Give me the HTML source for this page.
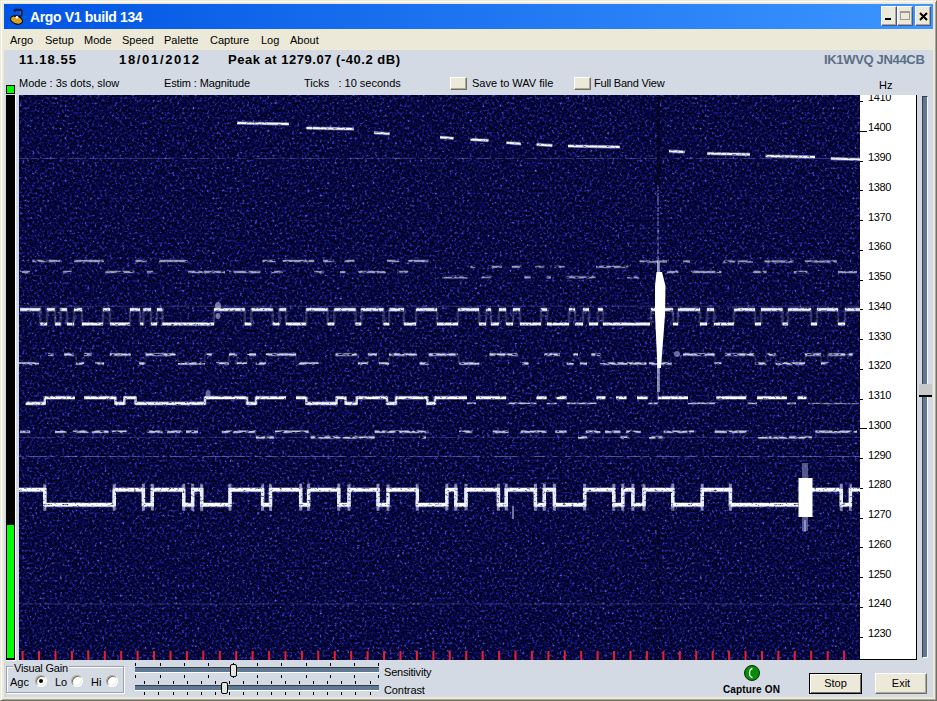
<!DOCTYPE html>
<html><head><meta charset="utf-8">
<style>
*{margin:0;padding:0;box-sizing:border-box}
html,body{width:937px;height:701px;overflow:hidden;background:#ECE9D8;font-family:"Liberation Sans",sans-serif;font-size:11px;color:#000}
.a{position:absolute;white-space:nowrap;line-height:1}
.r{position:absolute}
#title{position:absolute;left:4px;top:4px;width:929px;height:25px;background:linear-gradient(to right,#0054E3,#3D95FF)}
#menu{position:absolute;left:4px;top:29px;width:929px;height:21px;background:#ECE9D8}
#client{position:absolute;left:4px;top:50px;width:929px;height:647px;background:#D3DAE3}
.tb{position:absolute;top:6px;width:16px;height:20px;background:#ECE9D8;border-top:1px solid #fff;border-left:1px solid #fff;border-right:1px solid #40589a;border-bottom:1px solid #40589a;box-shadow:inset -1px -1px 0 #ACA899}
.bold{font-weight:bold}
#axis{position:absolute;left:860px;top:95px;width:57px;height:565px;background:#fff;border-right:1px solid #000;border-bottom:1px solid #000;overflow:hidden}
.chk{position:absolute;top:77px;width:17px;height:13px;background:#ECE9D8;border-top:1px solid #fff;border-left:1px solid #fff;border-right:1px solid #716F64;border-bottom:1px solid #716F64;box-shadow:inset -1px -1px 0 #ACA899}
.btn{position:absolute;top:673px;width:52px;height:21px;background:#ECE9D8;border-top:1px solid #fff;border-left:1px solid #fff;border-right:1px solid #716F64;border-bottom:1px solid #716F64;box-shadow:inset -1px -1px 0 #ACA899;text-align:center;line-height:19px;font-size:11px}
.radio{position:absolute;top:675px;width:12px;height:12px;border-radius:50%;background:#fff;border:1px solid;border-color:#ACA899 #fff #fff #ACA899;box-shadow:inset 1px 1px 0 #716F64,inset -1px -1px 0 #ECE9D8}
.tick{position:absolute;width:1px;height:3px;background:#000}
</style></head><body>
<div class="r" style="left:0;top:0;width:937px;height:701px;background:#ECE9D8;border-left:1px solid #ECE9D8;border-top:1px solid #ECE9D8;border-right:1px solid #716F64;border-bottom:1px solid #716F64;box-shadow:inset 1px 1px 0 #fff,inset -1px -1px 0 #ACA899"></div>
<div id="title"></div>
<svg class="r" style="left:6px;top:5px" width="22" height="22" viewBox="0 0 22 22">
<path d="M8,6.5 L9.5,4.8 L15,4.8 L15.5,6 L15.5,10 L13.5,11.8 L10,11.5" fill="none" stroke="#141a40" stroke-width="2.2" stroke-linejoin="round"/>
<path d="M14.6,6 L14.6,10" stroke="#7a7a90" stroke-width="0.8"/>
<ellipse cx="10.5" cy="15" rx="6.2" ry="3.9" transform="rotate(18 10.5 15)" fill="#dca21e" stroke="#000" stroke-width="1"/>
<path d="M8.5,11.8 C10,11 12,11 13.5,12" fill="none" stroke="#000" stroke-width="1.2"/>
<circle cx="11" cy="12.3" r="1.4" fill="#fff"/>
</svg>
<div class="a bold" style="left:30px;top:10px;font-size:14px;color:#fff;letter-spacing:-0.35px">Argo V1 build 134</div>
<div class="tb" style="left:881px"><div class="r" style="left:3px;top:11px;width:6px;height:2px;background:#000"></div></div>
<div class="tb" style="left:897px"><div class="r" style="left:2px;top:4px;width:10px;height:9px;border:1px solid #9a9a9a;border-top-width:2px"></div></div>
<div class="tb" style="left:915px"><svg class="r" style="left:3px;top:5px" width="9" height="9" viewBox="0 0 9 9"><path d="M1,1 L8,8 M8,1 L1,8" stroke="#000" stroke-width="2"/></svg></div>
<div id="menu"></div>
<div class="a" style="left:10px;top:35px">Argo</div>
<div class="a" style="left:45px;top:35px">Setup</div>
<div class="a" style="left:84px;top:35px">Mode</div>
<div class="a" style="left:122px;top:35px">Speed</div>
<div class="a" style="left:164px;top:35px">Palette</div>
<div class="a" style="left:210px;top:35px">Capture</div>
<div class="a" style="left:261px;top:35px">Log</div>
<div class="a" style="left:290px;top:35px">About</div>
<div id="client"></div>
<div class="a bold" style="left:19px;top:53px;font-size:13px;letter-spacing:1px">11.18.55</div>
<div class="a bold" style="left:119px;top:53px;font-size:13px;letter-spacing:1.67px">18/01/2012</div>
<div class="a bold" style="left:228px;top:53px;font-size:13px;letter-spacing:0.52px">Peak at 1279.07 (-40.2 dB)</div>
<div class="a bold" style="left:824px;top:53px;font-size:13px;color:#5B6F88;letter-spacing:-0.33px">IK1WVQ JN44CB</div>
<div class="a" style="left:19px;top:78px">Mode : 3s dots, slow</div>
<div class="a" style="left:164px;top:78px;letter-spacing:-0.12px">Estim : Magnitude</div>
<div class="a" style="left:304px;top:78px">Ticks &nbsp; : 10 seconds</div>
<div class="chk" style="left:450px"></div>
<div class="a" style="left:472px;top:78px">Save to WAV file</div>
<div class="chk" style="left:574px"></div>
<div class="a" style="left:594px;top:78px;letter-spacing:-0.2px">Full Band View</div>
<div class="a" style="left:879px;top:80px">Hz</div>
<!-- level meter -->
<div class="r" style="left:6px;top:85px;width:9px;height:9px;background:#00ff00;border:1px solid #000"></div>
<div class="r" style="left:6px;top:95px;width:10px;height:566px;background:#000;border-right:1px solid #fff;border-bottom:1px solid #fff"></div>
<div class="r" style="left:7px;top:525px;width:7px;height:133px;background:#00ff00"></div>
<svg id="specsvg" width="841" height="565" viewBox="19 95 841 565" style="position:absolute;left:19px;top:95px">
<defs>
<filter id="nz" x="19" y="95" width="841" height="565" filterUnits="userSpaceOnUse" color-interpolation-filters="sRGB">
<feTurbulence type="fractalNoise" baseFrequency="0.4" numOctaves="2" seed="7" result="t"/>
<feColorMatrix in="t" type="matrix" values="1 0 0 0 0  1 0 0 0 0  1 0 0 0 0  0 0 0 0 1"/>
<feComponentTransfer><feFuncR type="table" tableValues="0.004 0.005 0.006 0.008 0.01 0.02 0.05 0.13 0.28 0.45 0.6"/><feFuncG type="table" tableValues="0.005 0.006 0.008 0.01 0.013 0.025 0.06 0.14 0.3 0.47 0.62"/><feFuncB type="table" tableValues="0.05 0.06 0.07 0.09 0.15 0.25 0.38 0.54 0.72 0.86 0.95"/></feComponentTransfer>
<feGaussianBlur stdDeviation="0"/>
</filter>
<filter id="gl" x="19" y="95" width="841" height="565" filterUnits="userSpaceOnUse"><feGaussianBlur stdDeviation="0.9"/></filter>
<filter id="brkS" x="19" y="95" width="841" height="565" filterUnits="userSpaceOnUse" color-interpolation-filters="sRGB">
<feTurbulence type="fractalNoise" baseFrequency="0.35 0.5" numOctaves="2" seed="11" result="n"/>
<feColorMatrix in="n" type="matrix" values="0 0 0 0 1  0 0 0 0 1  0 0 0 0 1  3 0 0 0 -0.3" result="m"/>
<feComposite in="SourceGraphic" in2="m" operator="in"/>
</filter>
<filter id="brkW" x="19" y="95" width="841" height="565" filterUnits="userSpaceOnUse" color-interpolation-filters="sRGB">
<feTurbulence type="fractalNoise" baseFrequency="0.2 0.5" numOctaves="2" seed="23" result="n"/>
<feColorMatrix in="n" type="matrix" values="0 0 0 0 1  0 0 0 0 1  0 0 0 0 1  4 0 0 0 -1.1" result="m"/>
<feComposite in="SourceGraphic" in2="m" operator="in"/>
</filter>
</defs>
<rect x="19" y="95" width="841" height="565" fill="#000"/>
<rect x="19" y="95" width="841" height="565" filter="url(#nz)"/>
<rect x="657" y="95" width="3" height="90" fill="#000" opacity="0.45"/><rect x="657" y="520" width="3" height="140" fill="#000" opacity="0.3"/>
<g filter="url(#brkS)"><path d="M19.0,489.7 H44.8 M44.8,504.7 H114.2 M114.2,489.7 H143.4 M143.4,504.7 H152.3 M152.3,489.7 H183.7 M183.7,504.7 H192.7 M192.7,489.7 H201.7 M201.7,504.7 H230.0 M230.0,489.7 H262.6 M262.6,504.7 H270.5 M270.5,489.7 H300.7 M300.7,504.7 H308.6 M308.6,489.7 H338.8 M338.8,504.7 H349.0 M349.0,489.7 H378.0 M378.0,504.7 H388.0 M388.0,489.7 H417.3 M417.3,504.7 H446.8 M446.8,489.7 H455.8 M455.8,504.7 H466.0 M466.0,489.7 H498.4 M498.4,504.7 H506.2 M506.2,489.7 H535.4 M535.4,504.7 H544.3 M544.3,489.7 H554.4 M554.4,504.7 H584.7 M584.7,489.7 H613.8 M613.8,504.7 H622.8 M622.8,489.7 H632.9 M632.9,504.7 H644.0 M644.0,489.7 H672.8 M672.8,504.7 H702.2 M702.2,489.7 H731.6 M730.4,504.7 H798.3 M812.0,489.7 H841.3 M841.3,504.7 H850.4 M850.4,489.7 H860.0" fill="none" stroke="#b8beff" stroke-width="5.1" opacity="0.50"/><path d="M19.0,489.7 H44.8 M44.8,504.7 H114.2 M114.2,489.7 H143.4 M143.4,504.7 H152.3 M152.3,489.7 H183.7 M183.7,504.7 H192.7 M192.7,489.7 H201.7 M201.7,504.7 H230.0 M230.0,489.7 H262.6 M262.6,504.7 H270.5 M270.5,489.7 H300.7 M300.7,504.7 H308.6 M308.6,489.7 H338.8 M338.8,504.7 H349.0 M349.0,489.7 H378.0 M378.0,504.7 H388.0 M388.0,489.7 H417.3 M417.3,504.7 H446.8 M446.8,489.7 H455.8 M455.8,504.7 H466.0 M466.0,489.7 H498.4 M498.4,504.7 H506.2 M506.2,489.7 H535.4 M535.4,504.7 H544.3 M544.3,489.7 H554.4 M554.4,504.7 H584.7 M584.7,489.7 H613.8 M613.8,504.7 H622.8 M622.8,489.7 H632.9 M632.9,504.7 H644.0 M644.0,489.7 H672.8 M672.8,504.7 H702.2 M702.2,489.7 H731.6 M730.4,504.7 H798.3 M812.0,489.7 H841.3 M841.3,504.7 H850.4 M850.4,489.7 H860.0" fill="none" stroke="#fff" stroke-width="3.5" opacity="1.00"/><path d="M44.8,489.7 V504.7 M114.2,504.7 V489.7 M143.4,489.7 V504.7 M152.3,504.7 V489.7 M183.7,489.7 V504.7 M192.7,504.7 V489.7 M201.7,489.7 V504.7 M230.0,504.7 V489.7 M262.6,489.7 V504.7 M270.5,504.7 V489.7 M300.7,489.7 V504.7 M308.6,504.7 V489.7 M338.8,489.7 V504.7 M349.0,504.7 V489.7 M378.0,489.7 V504.7 M388.0,504.7 V489.7 M417.3,489.7 V504.7 M446.8,504.7 V489.7 M455.8,489.7 V504.7 M466.0,504.7 V489.7 M498.4,489.7 V504.7 M506.2,504.7 V489.7 M535.4,489.7 V504.7 M544.3,504.7 V489.7 M554.4,489.7 V504.7 M584.7,504.7 V489.7 M613.8,489.7 V504.7 M622.8,504.7 V489.7 M632.9,489.7 V504.7 M644.0,504.7 V489.7 M672.8,489.7 V504.7 M702.2,504.7 V489.7 M730.4,489.7 V504.7 M841.3,489.7 V504.7 M850.4,504.7 V489.7" fill="none" stroke="#fff" stroke-width="3.5" stroke-linecap="square" opacity="1.00"/><path d="M44.8,483.7 V510.7 M114.2,483.7 V510.7 M143.4,483.7 V510.7 M152.3,483.7 V510.7 M183.7,483.7 V510.7 M192.7,483.7 V510.7 M201.7,483.7 V510.7 M230.0,483.7 V510.7 M262.6,483.7 V510.7 M270.5,483.7 V510.7 M300.7,483.7 V510.7 M308.6,483.7 V510.7 M338.8,483.7 V510.7 M349.0,483.7 V510.7 M378.0,483.7 V510.7 M388.0,483.7 V510.7 M417.3,483.7 V510.7 M446.8,483.7 V510.7 M455.8,483.7 V510.7 M466.0,483.7 V510.7 M498.4,483.7 V510.7 M506.2,483.7 V510.7 M535.4,483.7 V510.7 M544.3,483.7 V510.7 M554.4,483.7 V510.7 M584.7,483.7 V510.7 M613.8,483.7 V510.7 M622.8,483.7 V510.7 M632.9,483.7 V510.7 M644.0,483.7 V510.7 M672.8,483.7 V510.7 M702.2,483.7 V510.7 M730.4,483.7 V510.7 M841.3,483.7 V510.7 M850.4,483.7 V510.7 " fill="none" stroke="#dfe2ff" stroke-width="3" opacity="0.6"/><path d="M20.0,309.6 H40.3 M40.3,324.0 H47.0 M47.0,309.6 H55.0 M55.0,324.0 H60.5 M60.5,309.6 H67.0 M67.0,324.0 H74.0 M74.0,309.6 H82.0 M82.0,324.0 H103.0 M103.0,309.6 H110.0 M110.0,324.0 H130.0 M130.0,309.6 H140.0 M140.0,324.0 H143.4 M143.4,309.6 H151.0 M151.0,324.0 H157.0 M157.0,309.6 H162.4 M162.4,324.0 H214.0 M214.0,309.6 H244.7 M244.7,324.0 H251.4 M251.4,309.6 H272.7 M272.7,324.0 H279.4 M279.4,309.6 H286.1 M286.1,324.0 H306.3 M306.3,309.6 H327.6 M327.6,324.0 H334.3 M334.3,309.6 H355.6 M355.6,324.0 H361.2 M361.2,309.6 H383.6 M383.6,324.0 H389.2 M389.2,309.6 H404.0 M404.0,324.0 H416.0 M416.0,309.6 H437.0 M437.0,324.0 H458.0 M458.0,309.6 H479.0 M479.0,324.0 H486.0 M486.0,309.6 H491.0 M491.0,324.0 H499.0 M499.0,309.6 H506.0 M506.0,324.0 H513.0 M513.0,309.6 H520.0 M520.0,324.0 H541.0 M541.0,309.6 H547.0 M547.0,324.0 H569.0 M569.0,309.6 H575.0 M575.0,324.0 H583.0 M583.0,309.6 H589.0 M589.0,324.0 H598.0 M598.0,309.6 H603.0 M603.0,324.0 H650.0 M651.0,309.6 H673.0 M673.0,324.0 H678.0 M678.0,309.6 H700.0 M700.0,324.0 H707.0 M707.0,309.6 H714.0 M714.0,324.0 H734.0 M734.0,309.6 H755.0 M755.0,324.0 H761.0 M761.0,309.6 H782.5 M782.5,324.0 H788.0 M788.0,309.6 H811.0 M811.0,324.0 H817.0 M817.0,309.6 H838.0 M838.0,324.0 H845.0 M845.0,309.6 H860.0" fill="none" stroke="#b8beff" stroke-width="4.1" opacity="0.47"/><path d="M20.0,309.6 H40.3 M40.3,324.0 H47.0 M47.0,309.6 H55.0 M55.0,324.0 H60.5 M60.5,309.6 H67.0 M67.0,324.0 H74.0 M74.0,309.6 H82.0 M82.0,324.0 H103.0 M103.0,309.6 H110.0 M110.0,324.0 H130.0 M130.0,309.6 H140.0 M140.0,324.0 H143.4 M143.4,309.6 H151.0 M151.0,324.0 H157.0 M157.0,309.6 H162.4 M162.4,324.0 H214.0 M214.0,309.6 H244.7 M244.7,324.0 H251.4 M251.4,309.6 H272.7 M272.7,324.0 H279.4 M279.4,309.6 H286.1 M286.1,324.0 H306.3 M306.3,309.6 H327.6 M327.6,324.0 H334.3 M334.3,309.6 H355.6 M355.6,324.0 H361.2 M361.2,309.6 H383.6 M383.6,324.0 H389.2 M389.2,309.6 H404.0 M404.0,324.0 H416.0 M416.0,309.6 H437.0 M437.0,324.0 H458.0 M458.0,309.6 H479.0 M479.0,324.0 H486.0 M486.0,309.6 H491.0 M491.0,324.0 H499.0 M499.0,309.6 H506.0 M506.0,324.0 H513.0 M513.0,309.6 H520.0 M520.0,324.0 H541.0 M541.0,309.6 H547.0 M547.0,324.0 H569.0 M569.0,309.6 H575.0 M575.0,324.0 H583.0 M583.0,309.6 H589.0 M589.0,324.0 H598.0 M598.0,309.6 H603.0 M603.0,324.0 H650.0 M651.0,309.6 H673.0 M673.0,324.0 H678.0 M678.0,309.6 H700.0 M700.0,324.0 H707.0 M707.0,309.6 H714.0 M714.0,324.0 H734.0 M734.0,309.6 H755.0 M755.0,324.0 H761.0 M761.0,309.6 H782.5 M782.5,324.0 H788.0 M788.0,309.6 H811.0 M811.0,324.0 H817.0 M817.0,309.6 H838.0 M838.0,324.0 H845.0 M845.0,309.6 H860.0" fill="none" stroke="#fff" stroke-width="2.5" opacity="0.95"/><path d="M40.3,309.6 V324.0 M47.0,324.0 V309.6 M55.0,309.6 V324.0 M60.5,324.0 V309.6 M67.0,309.6 V324.0 M74.0,324.0 V309.6 M82.0,309.6 V324.0 M103.0,324.0 V309.6 M110.0,309.6 V324.0 M130.0,324.0 V309.6 M140.0,309.6 V324.0 M143.4,324.0 V309.6 M151.0,309.6 V324.0 M157.0,324.0 V309.6 M162.4,309.6 V324.0 M214.0,324.0 V309.6 M244.7,309.6 V324.0 M251.4,324.0 V309.6 M272.7,309.6 V324.0 M279.4,324.0 V309.6 M286.1,309.6 V324.0 M306.3,324.0 V309.6 M327.6,309.6 V324.0 M334.3,324.0 V309.6 M355.6,309.6 V324.0 M361.2,324.0 V309.6 M383.6,309.6 V324.0 M389.2,324.0 V309.6 M404.0,309.6 V324.0 M416.0,324.0 V309.6 M437.0,309.6 V324.0 M458.0,324.0 V309.6 M479.0,309.6 V324.0 M486.0,324.0 V309.6 M491.0,309.6 V324.0 M499.0,324.0 V309.6 M506.0,309.6 V324.0 M513.0,324.0 V309.6 M520.0,309.6 V324.0 M541.0,324.0 V309.6 M547.0,309.6 V324.0 M569.0,324.0 V309.6 M575.0,309.6 V324.0 M583.0,324.0 V309.6 M589.0,309.6 V324.0 M598.0,324.0 V309.6 M603.0,309.6 V324.0 M651.0,324.0 V309.6 M673.0,309.6 V324.0 M678.0,324.0 V309.6 M700.0,309.6 V324.0 M707.0,324.0 V309.6 M714.0,309.6 V324.0 M734.0,324.0 V309.6 M755.0,309.6 V324.0 M761.0,324.0 V309.6 M782.5,309.6 V324.0 M788.0,324.0 V309.6 M811.0,309.6 V324.0 M817.0,324.0 V309.6 M838.0,309.6 V324.0 M845.0,324.0 V309.6" fill="none" stroke="#fff" stroke-width="2.5" stroke-linecap="square" opacity="0.19"/><path d="M25.7,403.4 H44.8 M44.8,397.8 H75.0 M84.0,397.8 H115.4 M115.4,403.4 H124.3 M124.3,397.8 H135.5 M135.5,403.4 H205.0 M205.0,397.8 H245.8 M247.0,403.4 H256.0 M256.0,397.8 H286.0 M296.0,397.8 H306.3 M306.3,403.4 H336.6 M336.6,397.8 H345.5 M345.5,403.4 H356.7 M356.7,397.8 H387.0 M387.0,403.4 H396.0 M396.0,397.8 H427.3 M427.3,403.4 H435.0 M435.0,397.8 H467.0 M476.0,397.8 H506.2 M536.5,397.8 H546.6 M556.7,397.8 H566.7 M596.5,397.8 H605.5 M616.0,397.8 H626.5 M637.0,397.8 H647.5 M658.0,397.8 H688.0 M716.4,397.8 H746.4 M757.0,397.8 H787.0 M797.4,397.8 H806.4" fill="none" stroke="#b8beff" stroke-width="4.1" opacity="0.50"/><path d="M25.7,403.4 H44.8 M44.8,397.8 H75.0 M84.0,397.8 H115.4 M115.4,403.4 H124.3 M124.3,397.8 H135.5 M135.5,403.4 H205.0 M205.0,397.8 H245.8 M247.0,403.4 H256.0 M256.0,397.8 H286.0 M296.0,397.8 H306.3 M306.3,403.4 H336.6 M336.6,397.8 H345.5 M345.5,403.4 H356.7 M356.7,397.8 H387.0 M387.0,403.4 H396.0 M396.0,397.8 H427.3 M427.3,403.4 H435.0 M435.0,397.8 H467.0 M476.0,397.8 H506.2 M536.5,397.8 H546.6 M556.7,397.8 H566.7 M596.5,397.8 H605.5 M616.0,397.8 H626.5 M637.0,397.8 H647.5 M658.0,397.8 H688.0 M716.4,397.8 H746.4 M757.0,397.8 H787.0 M797.4,397.8 H806.4" fill="none" stroke="#fff" stroke-width="2.5" opacity="1.00"/><path d="M44.8,403.4 V397.8 M115.4,397.8 V403.4 M124.3,403.4 V397.8 M135.5,397.8 V403.4 M205.0,403.4 V397.8 M247.0,397.8 V403.4 M256.0,403.4 V397.8 M306.3,397.8 V403.4 M336.6,403.4 V397.8 M345.5,397.8 V403.4 M356.7,403.4 V397.8 M387.0,397.8 V403.4 M396.0,403.4 V397.8 M427.3,397.8 V403.4 M435.0,403.4 V397.8" fill="none" stroke="#fff" stroke-width="2.5" stroke-linecap="square" opacity="0.80"/><path d="M237,123 L289,124 M306.5,128 L353.7,129 M373.9,132.8 L389.6,133.8 M440,137.3 L453.5,138.3 M470.5,139.5 L488.5,140.5 M506.5,142.7 L520.9,143.7 M536.6,144.6 L552.3,145.6 M568,146 L619.7,147 M669,151 L684.8,152 M707.3,153.4 L750,154.4 M765.7,156 L815,157 M830.8,158.5 L861,159.5" fill="none" stroke="#b8beff" stroke-width="3.5" opacity="0.5"/><path d="M237,123 L289,124 M306.5,128 L353.7,129 M373.9,132.8 L389.6,133.8 M440,137.3 L453.5,138.3 M470.5,139.5 L488.5,140.5 M506.5,142.7 L520.9,143.7 M536.6,144.6 L552.3,145.6 M568,146 L619.7,147 M669,151 L684.8,152 M707.3,153.4 L750,154.4 M765.7,156 L815,157 M830.8,158.5 L861,159.5" fill="none" stroke="#fff" stroke-width="2" opacity="0.95"/></g>
<g filter="url(#brkW)"><line x1="19" y1="158.4" x2="860" y2="158.4" stroke="#aab0ff" stroke-width="1" opacity="0.3"/><line x1="19" y1="306.2" x2="860" y2="306.2" stroke="#aab0ff" stroke-width="1" opacity="0.3"/><line x1="19" y1="456.5" x2="860" y2="456.5" stroke="#aab0ff" stroke-width="1" opacity="0.45"/><line x1="19" y1="604" x2="860" y2="604" stroke="#aab0ff" stroke-width="1" opacity="0.3"/><line x1="19" y1="437.4" x2="860" y2="437.4" stroke="#aab0ff" stroke-width="1" opacity="0.25"/><line x1="808" y1="403.4" x2="859" y2="403.4" stroke="#dfe2ff" stroke-width="1.5" opacity="0.6"/><line x1="658" y1="185" x2="658" y2="400" stroke="#aab0ff" stroke-width="1.5" opacity="0.5"/><path d="M467.0,403.4 H476.0 M506.2,403.4 H536.5 M546.6,403.4 H556.7 M566.7,403.4 H596.5 M647.5,403.4 H658.0 M688.0,403.4 H716.4 M746.4,403.4 H757.0 M787.0,403.4 H796.0" fill="none" stroke="#dfe2ff" stroke-width="1.8" opacity="0.85"/><path d="M19.0,363.5 H39.0 M48.0,354.6 H53.7 M63.8,354.6 H73.9 M76.0,363.5 H84.0 M84.0,354.6 H91.8 M95.0,363.5 H104.0 M109.8,354.6 H131.0 M139.0,363.5 H144.5 M145.6,354.6 H175.9 M178.0,363.5 H205.0 M205.0,354.6 H211.7 M216.0,363.5 H229.0 M229.0,354.6 H236.8 M236.8,363.5 H247.0 M247.0,354.6 H256.0 M256.0,363.5 H266.0 M266.0,354.6 H296.0 M296.0,363.5 H318.6 M335.5,354.6 H356.7 M357.9,363.5 H368.0 M368.0,354.6 H376.9 M379.0,363.5 H389.0 M389.0,354.6 H417.0 M419.5,363.5 H428.5 M428.5,354.6 H458.0 M459.2,363.5 H479.3 M489.4,354.6 H517.4 M522.0,363.5 H528.6 M544.3,354.6 H560.0 M566.7,363.5 H573.5 M573.5,354.6 H578.0 M580.0,363.5 H587.0 M591.4,354.6 H600.4 M600.4,363.5 H646.3 M649.0,363.5 H671.6 M683.0,354.6 H714.6 M714.6,363.5 H721.4 M724.8,354.6 H754.2 M755.3,363.5 H766.6 M766.6,354.6 H775.7 M775.7,363.5 H805.0 M805.0,354.6 H821.0 M821.0,363.5 H827.7 M827.7,354.6 H852.6" fill="none" stroke="#b8beff" stroke-width="3.6" opacity="0.38"/><path d="M19.0,363.5 H39.0 M48.0,354.6 H53.7 M63.8,354.6 H73.9 M76.0,363.5 H84.0 M84.0,354.6 H91.8 M95.0,363.5 H104.0 M109.8,354.6 H131.0 M139.0,363.5 H144.5 M145.6,354.6 H175.9 M178.0,363.5 H205.0 M205.0,354.6 H211.7 M216.0,363.5 H229.0 M229.0,354.6 H236.8 M236.8,363.5 H247.0 M247.0,354.6 H256.0 M256.0,363.5 H266.0 M266.0,354.6 H296.0 M296.0,363.5 H318.6 M335.5,354.6 H356.7 M357.9,363.5 H368.0 M368.0,354.6 H376.9 M379.0,363.5 H389.0 M389.0,354.6 H417.0 M419.5,363.5 H428.5 M428.5,354.6 H458.0 M459.2,363.5 H479.3 M489.4,354.6 H517.4 M522.0,363.5 H528.6 M544.3,354.6 H560.0 M566.7,363.5 H573.5 M573.5,354.6 H578.0 M580.0,363.5 H587.0 M591.4,354.6 H600.4 M600.4,363.5 H646.3 M649.0,363.5 H671.6 M683.0,354.6 H714.6 M714.6,363.5 H721.4 M724.8,354.6 H754.2 M755.3,363.5 H766.6 M766.6,354.6 H775.7 M775.7,363.5 H805.0 M805.0,354.6 H821.0 M821.0,363.5 H827.7 M827.7,354.6 H852.6" fill="none" stroke="#fff" stroke-width="2.0" opacity="0.75"/><path d="M76.0,354.6 V363.5 M84.0,363.5 V354.6 M145.6,363.5 V354.6 M178.0,354.6 V363.5 M205.0,363.5 V354.6 M229.0,363.5 V354.6 M236.8,354.6 V363.5 M247.0,363.5 V354.6 M256.0,354.6 V363.5 M266.0,363.5 V354.6 M296.0,354.6 V363.5 M357.9,354.6 V363.5 M368.0,363.5 V354.6 M379.0,354.6 V363.5 M389.0,363.5 V354.6 M428.5,363.5 V354.6 M459.2,354.6 V363.5 M573.5,363.5 V354.6 M580.0,354.6 V363.5 M600.4,354.6 V363.5 M714.6,354.6 V363.5 M755.3,354.6 V363.5 M766.6,363.5 V354.6 M775.7,354.6 V363.5 M805.0,363.5 V354.6 M821.0,354.6 V363.5 M827.7,363.5 V354.6" fill="none" stroke="#fff" stroke-width="2.0" stroke-linecap="square" opacity="0.11"/><path d="M20.0,431.8 H30.0 M55.0,431.8 H67.0 M72.8,431.8 H88.5 M91.8,431.8 H108.6 M112.0,431.8 H126.6 M146.7,431.8 H162.4 M167.0,431.8 H182.6 M186.0,431.8 H198.0 M221.8,431.8 H256.0 M256.0,437.4 H273.8 M275.0,431.8 H308.6 M310.8,437.4 H374.7 M374.7,431.8 H428.5 M419.5,437.4 H426.0 M459.0,431.8 H472.6 M492.8,431.8 H508.5 M520.8,431.8 H546.6 M555.5,431.8 H566.7 M578.0,437.4 H587.0 M585.8,431.8 H600.4 M605.0,431.8 H620.5 M620.5,437.4 H627.3 M626.0,431.8 H640.7 M649.0,437.4 H662.6 M663.7,431.8 H694.2 M714.6,431.8 H748.5 M757.6,437.4 H812.0 M815.3,431.8 H857.0" fill="none" stroke="#b8beff" stroke-width="3.6" opacity="0.35"/><path d="M20.0,431.8 H30.0 M55.0,431.8 H67.0 M72.8,431.8 H88.5 M91.8,431.8 H108.6 M112.0,431.8 H126.6 M146.7,431.8 H162.4 M167.0,431.8 H182.6 M186.0,431.8 H198.0 M221.8,431.8 H256.0 M256.0,437.4 H273.8 M275.0,431.8 H308.6 M310.8,437.4 H374.7 M374.7,431.8 H428.5 M419.5,437.4 H426.0 M459.0,431.8 H472.6 M492.8,431.8 H508.5 M520.8,431.8 H546.6 M555.5,431.8 H566.7 M578.0,437.4 H587.0 M585.8,431.8 H600.4 M605.0,431.8 H620.5 M620.5,437.4 H627.3 M626.0,431.8 H640.7 M649.0,437.4 H662.6 M663.7,431.8 H694.2 M714.6,431.8 H748.5 M757.6,437.4 H812.0 M815.3,431.8 H857.0" fill="none" stroke="#fff" stroke-width="2.0" opacity="0.70"/><path d="M256.0,431.8 V437.4 M275.0,437.4 V431.8 M310.8,431.8 V437.4 M374.7,437.4 V431.8 M585.8,437.4 V431.8 M620.5,431.8 V437.4 M626.0,437.4 V431.8 M663.7,437.4 V431.8" fill="none" stroke="#fff" stroke-width="2.0" stroke-linecap="square" opacity="0.07"/><path d="M20.0,272.0 H30.0 M32.4,261.0 H60.5 M62.7,272.0 H71.7 M74.0,261.0 H104.0 M105.3,272.0 H134.4 M135.5,261.0 H146.7 M146.7,272.0 H153.5 M159.0,261.0 H188.0 M188.0,272.0 H225.0 M229.0,272.0 H260.4 M262.6,261.0 H276.0 M271.6,272.0 H282.8 M282.8,261.0 H314.2 M314.2,272.0 H324.2 M323.0,261.0 H334.3 M340.0,272.0 H345.5 M344.4,261.0 H354.5 M357.9,272.0 H385.9 M387.0,261.0 H399.3 M397.0,272.0 H408.3 M408.3,261.0 H428.5" fill="none" stroke="#b8beff" stroke-width="3.4" opacity="0.25"/><path d="M20.0,272.0 H30.0 M32.4,261.0 H60.5 M62.7,272.0 H71.7 M74.0,261.0 H104.0 M105.3,272.0 H134.4 M135.5,261.0 H146.7 M146.7,272.0 H153.5 M159.0,261.0 H188.0 M188.0,272.0 H225.0 M229.0,272.0 H260.4 M262.6,261.0 H276.0 M271.6,272.0 H282.8 M282.8,261.0 H314.2 M314.2,272.0 H324.2 M323.0,261.0 H334.3 M340.0,272.0 H345.5 M344.4,261.0 H354.5 M357.9,272.0 H385.9 M387.0,261.0 H399.3 M397.0,272.0 H408.3 M408.3,261.0 H428.5" fill="none" stroke="#fff" stroke-width="1.8" opacity="0.50"/><path d="M442.4,277.3 H468.1 M470.4,266.8 H474.9 M481.6,277.3 H491.7 M490.5,266.8 H501.8 M511.8,266.8 H521.9 M524.2,277.3 H530.9 M535.4,266.8 H544.3 M546.6,277.3 H551.0 M554.4,266.8 H564.5 M566.7,277.3 H595.9 M595.9,266.8 H628.4 M627.3,277.3 H638.5" fill="none" stroke="#b8beff" stroke-width="3.4" opacity="0.25"/><path d="M442.4,277.3 H468.1 M470.4,266.8 H474.9 M481.6,277.3 H491.7 M490.5,266.8 H501.8 M511.8,266.8 H521.9 M524.2,277.3 H530.9 M535.4,266.8 H544.3 M546.6,277.3 H551.0 M554.4,266.8 H564.5 M566.7,277.3 H595.9 M595.9,266.8 H628.4 M627.3,277.3 H638.5" fill="none" stroke="#fff" stroke-width="1.8" opacity="0.50"/><path d="M639.6,261.5 H667.0 M667.0,272.0 H678.4 M683.0,261.5 H690.0 M690.9,272.0 H721.4 M723.7,261.5 H753.0 M753.0,272.0 H766.6 M764.4,261.5 H793.8 M793.8,272.0 H807.4 M805.0,261.5 H836.8 M838.0,272.0 H857.0" fill="none" stroke="#b8beff" stroke-width="3.4" opacity="0.25"/><path d="M639.6,261.5 H667.0 M667.0,272.0 H678.4 M683.0,261.5 H690.0 M690.9,272.0 H721.4 M723.7,261.5 H753.0 M753.0,272.0 H766.6 M764.4,261.5 H793.8 M793.8,272.0 H807.4 M805.0,261.5 H836.8 M838.0,272.0 H857.0" fill="none" stroke="#fff" stroke-width="1.8" opacity="0.50"/></g>
<g opacity="0.5"><ellipse cx="218" cy="306" rx="3" ry="4" fill="#dfe2ff"/><ellipse cx="218" cy="316" rx="2.5" ry="3" fill="#dfe2ff"/><ellipse cx="208" cy="394" rx="2.5" ry="4" fill="#c8ccff"/><rect x="512" y="506" width="2" height="13" fill="#dfe2ff"/><rect x="804" y="520" width="2" height="12" fill="#c8ccff"/><ellipse cx="677" cy="354" rx="3" ry="3" fill="#c8ccff"/></g>
<polygon points="657,262 660,262 660,392 657,392" fill="#e8eaff" opacity="0.5"/>
<polygon points="656.5,272 662,272 665.5,286 665,315 661,368 657.5,368 655,315 655,286" fill="#fff"/>
<rect x="802" y="463" width="6" height="68" fill="#c8ccff" opacity="0.4"/>
<rect x="798.5" y="478" width="14" height="39" fill="#fff"/>
<path d="M22.6,651 V660 M39.0,651 V660 M55.5,651 V660 M71.9,651 V660 M88.3,651 V660 M104.8,651 V660 M121.2,651 V660 M137.6,651 V660 M154.0,651 V660 M170.5,651 V660 M186.9,651 V660 M203.3,651 V660 M219.8,651 V660 M236.2,651 V660 M252.6,651 V660 M269.1,651 V660 M285.5,651 V660 M301.9,651 V660 M318.3,651 V660 M334.8,651 V660 M351.2,651 V660 M367.6,651 V660 M384.1,651 V660 M400.5,651 V660 M416.9,651 V660 M433.4,651 V660 M449.8,651 V660 M466.2,651 V660 M482.6,651 V660 M499.1,651 V660 M515.5,651 V660 M531.9,651 V660 M548.4,651 V660 M564.8,651 V660 M581.2,651 V660 M597.6,651 V660 M614.1,651 V660 M630.5,651 V660 M646.9,651 V660 M663.4,651 V660 M679.8,651 V660 M696.2,651 V660 M712.7,651 V660 M729.1,651 V660 M745.5,651 V660 M762.0,651 V660 M778.4,651 V660 M794.8,651 V660 M811.2,651 V660 M827.7,651 V660 M844.1,651 V660 " stroke="#e8202a" stroke-width="2" fill="none"/>
</svg>
<div id="axis"><div class="a" style="left:8px;top:-2.6px;letter-spacing:-0.4px">1410</div><div style="position:absolute;left:0px;top:6px;width:3px;height:1px;background:#000"></div><div class="a" style="left:8px;top:27.2px;letter-spacing:-0.4px">1400</div><div style="position:absolute;left:0px;top:36px;width:7px;height:1px;background:#000"></div><div class="a" style="left:8px;top:57.0px;letter-spacing:-0.4px">1390</div><div style="position:absolute;left:0px;top:66px;width:3px;height:1px;background:#000"></div><div class="a" style="left:8px;top:86.7px;letter-spacing:-0.4px">1380</div><div style="position:absolute;left:0px;top:95px;width:3px;height:1px;background:#000"></div><div class="a" style="left:8px;top:116.5px;letter-spacing:-0.4px">1370</div><div style="position:absolute;left:0px;top:125px;width:3px;height:1px;background:#000"></div><div class="a" style="left:8px;top:146.2px;letter-spacing:-0.4px">1360</div><div style="position:absolute;left:0px;top:155px;width:3px;height:1px;background:#000"></div><div class="a" style="left:8px;top:176.0px;letter-spacing:-0.4px">1350</div><div style="position:absolute;left:0px;top:185px;width:3px;height:1px;background:#000"></div><div class="a" style="left:8px;top:205.8px;letter-spacing:-0.4px">1340</div><div style="position:absolute;left:0px;top:214px;width:3px;height:1px;background:#000"></div><div class="a" style="left:8px;top:235.5px;letter-spacing:-0.4px">1330</div><div style="position:absolute;left:0px;top:244px;width:3px;height:1px;background:#000"></div><div class="a" style="left:8px;top:265.3px;letter-spacing:-0.4px">1320</div><div style="position:absolute;left:0px;top:274px;width:3px;height:1px;background:#000"></div><div class="a" style="left:8px;top:295.0px;letter-spacing:-0.4px">1310</div><div style="position:absolute;left:0px;top:304px;width:3px;height:1px;background:#000"></div><div class="a" style="left:8px;top:324.8px;letter-spacing:-0.4px">1300</div><div style="position:absolute;left:0px;top:333px;width:7px;height:1px;background:#000"></div><div class="a" style="left:8px;top:354.6px;letter-spacing:-0.4px">1290</div><div style="position:absolute;left:0px;top:363px;width:3px;height:1px;background:#000"></div><div class="a" style="left:8px;top:384.3px;letter-spacing:-0.4px">1280</div><div style="position:absolute;left:0px;top:393px;width:3px;height:1px;background:#000"></div><div class="a" style="left:8px;top:414.1px;letter-spacing:-0.4px">1270</div><div style="position:absolute;left:0px;top:423px;width:3px;height:1px;background:#000"></div><div class="a" style="left:8px;top:443.8px;letter-spacing:-0.4px">1260</div><div style="position:absolute;left:0px;top:452px;width:3px;height:1px;background:#000"></div><div class="a" style="left:8px;top:473.6px;letter-spacing:-0.4px">1250</div><div style="position:absolute;left:0px;top:482px;width:3px;height:1px;background:#000"></div><div class="a" style="left:8px;top:503.4px;letter-spacing:-0.4px">1240</div><div style="position:absolute;left:0px;top:512px;width:3px;height:1px;background:#000"></div><div class="a" style="left:8px;top:533.1px;letter-spacing:-0.4px">1230</div><div style="position:absolute;left:0px;top:542px;width:3px;height:1px;background:#000"></div></div>
<!-- right slider -->
<div class="r" style="left:922px;top:96px;width:6px;height:562px;background:#5E7891;border-right:1px solid #fff;border-bottom:1px solid #fff;border-top:1px solid #33404c;border-left:1px solid #33404c"></div>
<div class="r" style="left:919px;top:384px;width:13px;height:13px;background:#c8c8c8;border-bottom:2px solid #000"></div>
<!-- group box -->
<div class="r" style="left:6px;top:666px;width:118px;height:27px;border:1px solid #9aa3ad;box-shadow:1px 1px 0 #fff inset,1px 1px 0 #fff"></div>
<div class="a" style="left:13px;top:663px;padding:0 1px;background:#D3DAE3;letter-spacing:-0.2px">Visual Gain</div>
<div class="a" style="left:10px;top:677px">Agc</div>
<div class="radio" style="left:35px"><div class="r" style="left:3px;top:3px;width:4px;height:4px;border-radius:50%;background:#000"></div></div>
<div class="a" style="left:55px;top:677px">Lo</div>
<div class="radio" style="left:71px"></div>
<div class="a" style="left:91px;top:677px">Hi</div>
<div class="radio" style="left:106px"></div>
<!-- sliders -->
<div class="r" style="left:135px;top:667px;width:244px;height:6px;background:#5E7891;border-top:1px solid #33404c;border-bottom:1px solid #fff"></div><div class="tick" style="left:135px;top:663px"></div><div class="tick" style="left:135px;top:675px"></div><div class="tick" style="left:160px;top:663px"></div><div class="tick" style="left:160px;top:675px"></div><div class="tick" style="left:184px;top:663px"></div><div class="tick" style="left:184px;top:675px"></div><div class="tick" style="left:208px;top:663px"></div><div class="tick" style="left:208px;top:675px"></div><div class="tick" style="left:233px;top:663px"></div><div class="tick" style="left:233px;top:675px"></div><div class="tick" style="left:257px;top:663px"></div><div class="tick" style="left:257px;top:675px"></div><div class="tick" style="left:281px;top:663px"></div><div class="tick" style="left:281px;top:675px"></div><div class="tick" style="left:306px;top:663px"></div><div class="tick" style="left:306px;top:675px"></div><div class="tick" style="left:330px;top:663px"></div><div class="tick" style="left:330px;top:675px"></div><div class="tick" style="left:354px;top:663px"></div><div class="tick" style="left:354px;top:675px"></div><div class="tick" style="left:378px;top:663px"></div><div class="tick" style="left:378px;top:675px"></div><div class="r" style="left:230px;top:664px;width:7px;height:13px;background:#e4e4e4;border:1px solid #000;border-radius:2px"></div><div class="r" style="left:135px;top:685px;width:244px;height:6px;background:#5E7891;border-top:1px solid #33404c;border-bottom:1px solid #fff"></div><div class="tick" style="left:144px;top:681px"></div><div class="tick" style="left:144px;top:692px"></div><div class="tick" style="left:158px;top:681px"></div><div class="tick" style="left:158px;top:692px"></div><div class="tick" style="left:173px;top:681px"></div><div class="tick" style="left:173px;top:692px"></div><div class="tick" style="left:187px;top:681px"></div><div class="tick" style="left:187px;top:692px"></div><div class="tick" style="left:201px;top:681px"></div><div class="tick" style="left:201px;top:692px"></div><div class="tick" style="left:215px;top:681px"></div><div class="tick" style="left:215px;top:692px"></div><div class="tick" style="left:229px;top:681px"></div><div class="tick" style="left:229px;top:692px"></div><div class="tick" style="left:243px;top:681px"></div><div class="tick" style="left:243px;top:692px"></div><div class="tick" style="left:257px;top:681px"></div><div class="tick" style="left:257px;top:692px"></div><div class="tick" style="left:271px;top:681px"></div><div class="tick" style="left:271px;top:692px"></div><div class="tick" style="left:285px;top:681px"></div><div class="tick" style="left:285px;top:692px"></div><div class="tick" style="left:299px;top:681px"></div><div class="tick" style="left:299px;top:692px"></div><div class="tick" style="left:313px;top:681px"></div><div class="tick" style="left:313px;top:692px"></div><div class="tick" style="left:327px;top:681px"></div><div class="tick" style="left:327px;top:692px"></div><div class="tick" style="left:341px;top:681px"></div><div class="tick" style="left:341px;top:692px"></div><div class="tick" style="left:355px;top:681px"></div><div class="tick" style="left:355px;top:692px"></div><div class="tick" style="left:370px;top:681px"></div><div class="tick" style="left:370px;top:692px"></div><div class="r" style="left:221px;top:682px;width:7px;height:12px;background:#e4e4e4;border:1px solid #000;border-radius:2px"></div>
<div class="a" style="left:384px;top:667px;letter-spacing:-0.2px">Sensitivity</div>
<div class="a" style="left:384px;top:685px;letter-spacing:-0.1px">Contrast</div>
<!-- LED -->
<svg class="r" style="left:743px;top:664px" width="18" height="18" viewBox="0 0 18 18"><circle cx="9" cy="9" r="7.5" fill="#0a8a0a" stroke="#022a02" stroke-width="1"/><path d="M9.5,4.5 C7,5 6.5,7 6.5,9 C6.5,11 7,13 9.5,13.5" fill="none" stroke="#e8f8e0" stroke-width="1.3"/></svg>
<div class="a bold" style="left:723px;top:685px;font-size:10px;letter-spacing:0.15px">Capture ON</div>
<div class="btn" style="left:809px;width:53px;border:1px solid #000;box-shadow:inset 1px 1px 0 #fff,inset -1px -1px 0 #716F64">Stop</div>
<div class="btn" style="left:875px">Exit</div>
</body></html>
